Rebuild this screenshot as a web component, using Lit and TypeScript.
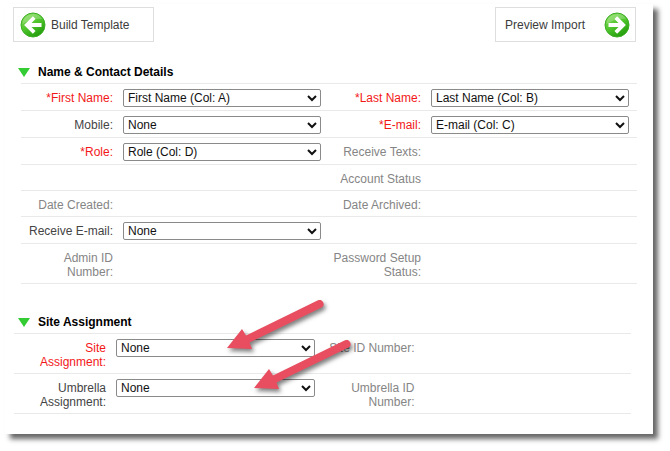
import { LitElement, html, css, svg, nothing } from "lit";
import { customElement, property } from "lit/decorators.js";

interface Field {
  label: string;
  required?: boolean;
  value?: string;
  pointer?: boolean;
}

type Row = [Field | null, Field | null];

const contactRows: Row[] = [
  [
    { label: "*First Name:", required: true, value: "First Name (Col: A)" },
    { label: "*Last Name:", required: true, value: "Last Name (Col: B)" },
  ],
  [
    { label: "Mobile:", value: "None" },
    { label: "*E-mail:", required: true, value: "E-mail (Col: C)" },
  ],
  [{ label: "*Role:", required: true, value: "Role (Col: D)" }, { label: "Receive Texts:" }],
  [null, { label: "Account Status" }],
  [{ label: "Date Created:" }, { label: "Date Archived:" }],
  [{ label: "Receive E-mail:", value: "None" }, null],
  [{ label: "Admin ID Number:" }, { label: "Password Setup Status:" }],
];

const siteRows: Row[] = [
  [{ label: "Site Assignment:", required: true, value: "None", pointer: true }, { label: "Site ID Number:" }],
  [{ label: "Umbrella Assignment:", value: "None", pointer: true }, { label: "Umbrella ID Number:" }],
];

@customElement("arrow-badge")
class ArrowBadge extends LitElement {
  @property() direction = "left";

  static styles = css`
    :host {
      display: block;
      flex: none;
      width: 26px;
      height: 26px;
    }
    svg {
      display: block;
    }
  `;

  render() {
    const shape = svg`<path d="M14.2 5.6 L6.8 13 L14.2 20.4 M7.5 13 H21.5"
      fill="none" stroke="#fff" stroke-width="3.8"
      transform=${this.direction === "right" ? "translate(26 0) scale(-1 1)" : "translate(0 0)"} />`;
    return html`<svg width="26" height="26" viewBox="0 0 26 26" aria-hidden="true">
      <defs>
        <linearGradient id="g" x1="0.2" y1="0" x2="0.8" y2="1">
          <stop offset="0" stop-color="#84dc58" />
          <stop offset="0.5" stop-color="#4cc32a" />
          <stop offset="1" stop-color="#1c9608" />
        </linearGradient>
      </defs>
      <circle cx="13" cy="13" r="12" fill="url(#g)" stroke="#3fae26" stroke-width="1" />
      <path d="M2.5 12 A10.6 10.6 0 0 1 22 7 Q12 6 2.5 12 Z" fill="#fff" opacity="0.22" />
      ${shape}
    </svg>`;
  }
}

@customElement("field-section")
class FieldSection extends LitElement {
  @property() heading = "";
  @property({ attribute: false }) rows: Row[] = [];

  static styles = css`
    :host {
      display: block;
    }
    .heading {
      display: flex;
      align-items: center;
      gap: 8px;
      margin: 0 0 4px 13px;
      font-size: 12px;
      line-height: 14px;
      font-weight: bold;
      color: #000;
    }
    .toggle {
      width: 12px;
      height: 14px;
      padding: 0;
      border: 0;
      background: none;
    }
    .toggle svg {
      display: block;
    }
    .rows {
      margin: 0 var(--rows-right, 16px) 0 var(--rows-left, 16px);
      border-bottom: 1px solid #e9e9e9;
    }
    .row {
      display: grid;
      grid-template-columns: 1fr 1fr;
      border-top: 1px solid #e9e9e9;
    }
    .field {
      display: grid;
      grid-template-columns: 92px 1fr;
      column-gap: 10px;
      align-items: start;
      padding-right: 8px;
    }
    .label {
      padding: 7px 0 4px 4px;
      text-align: right;
      line-height: 14px;
      color: #858585;
    }
    .active {
      color: #444;
    }
    .required {
      color: #f21818;
    }
    .control {
      position: relative;
      padding: 5px 0 3px;
    }
    select {
      display: block;
      box-sizing: border-box;
      width: 100%;
      height: 18px;
      padding: 0;
      border: 1px solid #8a8a8a;
      border-radius: 2px;
      background-color: #fff;
      color: #111;
      font-family: inherit;
      font-size: 12px;
    }
    .pointer {
      position: absolute;
      left: 108px;
      top: -36px;
      z-index: 1;
      pointer-events: none;
      overflow: visible;
      filter: drop-shadow(2px 3px 2px rgba(0, 0, 0, 0.5));
    }
    .row:last-child .pointer {
      left: 135px;
    }
  `;

  private field(f: Field | null, id: string) {
    if (!f) return html`<div class="field"></div>`;
    if (!f.value) return html`<div class="field"><span class="label">${f.label}</span></div>`;
    return html`<div class="field">
      <label class="label ${f.required ? "required" : "active"}" for=${id}>${f.label}</label>
      <div class="control">
        <select id=${id}>
          <option>${f.value}</option>
        </select>
        ${f.pointer
          ? html`<svg class="pointer" width="102" height="56" viewBox="0 0 102 56" aria-hidden="true">
              <path
                d="M3 50 L18 31 L22 37.5 L93.5 2.6 A4 4 0 0 1 97.5 9.6 L25.5 44.5 L28 51 Z"
                fill="#e84d60"
              />
            </svg>`
          : nothing}
      </div>
    </div>`;
  }

  render() {
    return html`
      <h2 class="heading">
        <button class="toggle" type="button" aria-label="Collapse ${this.heading}">
          <svg width="12" height="14" viewBox="0 0 12 14"><path d="M0 3 H12 L6 12 Z" fill="#33cc33" /></svg>
        </button>
        ${this.heading}
      </h2>
      <div class="rows">
        ${this.rows.map(
          ([a, b], i) => html`<div class="row">${this.field(a, `a${i}`)}${this.field(b, `b${i}`)}</div>`
        )}
      </div>
    `;
  }
}

@customElement("app-root")
class AppRoot extends LitElement {
  static styles = css`
    :host {
      display: flow-root;
      background: #fff;
      font-family: "Liberation Sans", Arial, sans-serif;
      font-size: 12px;
      line-height: 14px;
    }
    .card {
      margin: 4px 17px 17px 5px;
      padding: 3px 0 20px;
      background: #fff;
      box-shadow: 5px 5px 5px rgba(0, 0, 0, 0.6);
    }
    .toolbar {
      display: flex;
      justify-content: space-between;
      margin: 0 17px 23px 8px;
    }
    .step {
      display: flex;
      align-items: center;
      gap: 5px;
      box-sizing: border-box;
      width: 141px;
      height: 35px;
      padding: 0 6px;
      border: 1px solid #dedede;
      background: #fff;
      color: #3c3c3c;
      font-family: inherit;
      font-size: 12px;
      line-height: 14px;
    }
    .next {
      justify-content: space-between;
      padding: 0 5px 0 9px;
    }
    .site {
      margin-top: 31px;
      --rows-left: 9px;
      --rows-right: 22px;
    }
  `;

  render() {
    return html`<main class="card">
      <nav class="toolbar">
        <button class="step" type="button"><arrow-badge direction="left"></arrow-badge>Build Template</button>
        <button class="step next" type="button">Preview Import<arrow-badge direction="right"></arrow-badge></button>
      </nav>
      <field-section heading="Name &amp; Contact Details" .rows=${contactRows}></field-section>
      <field-section class="site" heading="Site Assignment" .rows=${siteRows}></field-section>
    </main>`;
  }
}
